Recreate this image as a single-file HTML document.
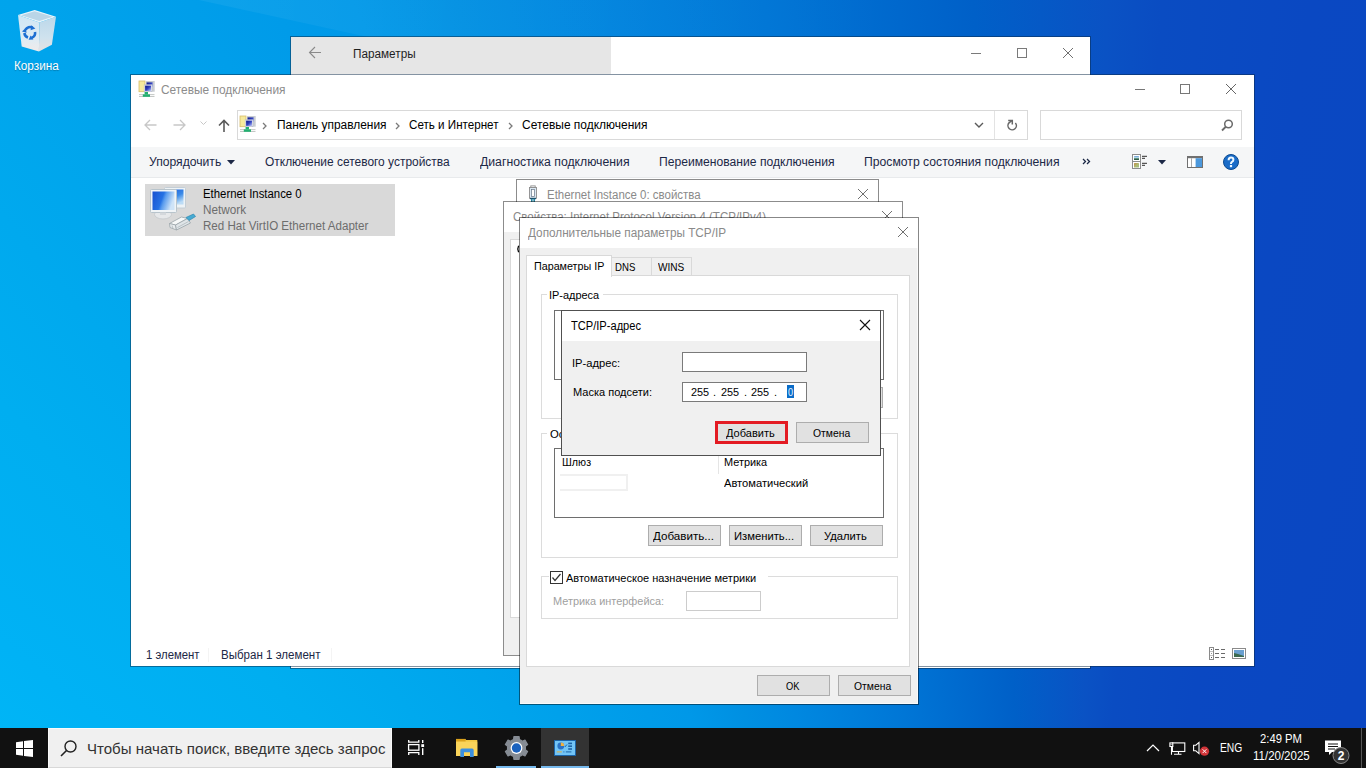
<!DOCTYPE html>
<html><head><meta charset="utf-8"><title>Сетевые подключения</title>
<style>
html,body{margin:0;padding:0;width:1366px;height:768px;overflow:hidden;background:#0a78dc;}
body{position:relative;font-family:"Liberation Sans", sans-serif;}
.a{position:absolute;}
.t{white-space:nowrap;transform-origin:0 0;}
svg.a{overflow:visible;}
</style></head><body>
<div class="a" id="desk" style="left:0;top:0;width:1366px;height:768px;background:conic-gradient(from -60deg at 1060px 1500px,#00b8f8 0deg,#00b6f6 5deg,#00b2f5 9deg,#00aef0 16deg,#00a4ec 25deg,#0098e8 34.7deg,#0090e2 38deg,#0088e0 41.4deg,#0076d6 48.8deg,#0060c8 56.7deg,#0a52c4 61.8deg,#0a4cc2 63.9deg,#0a48c2 69.5deg,#0a46c2 80deg,#0a46c2 360deg);"></div>
<div class="a" style="left:0;top:0;width:900px;height:200px;clip-path:polygon(199px 0,900px 0,900px 154px);background:linear-gradient(to right,rgba(255,255,255,.07),rgba(255,255,255,.03) 50%,rgba(255,255,255,0));"></div>
<svg class="a" style="left:14px;top:6px;" width="46" height="50" viewBox="0 0 46 50">
<defs><linearGradient id="rbL" x1="0" y1="0" x2="0" y2="1"><stop offset="0" stop-color="#cfe6f4"></stop><stop offset="0.6" stop-color="#dcecf5"></stop><stop offset="1" stop-color="#f0ebea"></stop></linearGradient>
<linearGradient id="rbR" x1="0" y1="0" x2="0" y2="1"><stop offset="0" stop-color="#bcd8ea"></stop><stop offset="0.6" stop-color="#cfe2ee"></stop><stop offset="1" stop-color="#e6e2e2"></stop></linearGradient></defs>
<path d="M4 9.1 L25.4 16.4 L24.9 45.6 L7.7 40.4 Z" fill="url(#rbL)"></path>
<path d="M25.4 16.4 L42 10.7 L37.9 38.8 L24.9 45.6 Z" fill="url(#rbR)"></path>
<path d="M4 9.1 L20.7 3.9 L42 10.7 L25.4 16.4 Z" fill="#e9f5fb"></path>
<path d="M7 9.2 L20.7 5.2 L38.8 10.8 L25.3 15 Z" fill="#b9d5e7"></path>
<g fill="none" stroke="#1c6fd2" stroke-width="2.6">
<path d="M11.5 23.8 A5.2 5.2 0 0 1 18.6 21.6"></path>
<path d="M21 26 A5.2 5.2 0 0 1 17.6 31.8"></path>
<path d="M14 31.4 A5.2 5.2 0 0 1 10.4 27"></path>
</g>
<g fill="#1c6fd2"><path d="M17.2 19.2 L21.4 22.6 L16.6 24.2Z"></path><path d="M19.4 33.6 L14.6 33.8 L16.6 29.4Z"></path><path d="M8 25.4 L11.6 22 L12.6 26.8Z"></path></g>
</svg>
<div class="a t" style="left: 14.4px; top: 59.84px; font-size: 12px; line-height: 12px; color: rgb(255, 255, 255); text-shadow: rgba(0, 0, 0, 0.25) 0px 1px 1px; transform: scaleX(0.9775);">Корзина</div>
<div class="a" style="left:290px;top:36px;width:801px;height:633px;background:#fff;border:1px solid rgba(10,40,70,.5);box-sizing:border-box;background-clip:padding-box;"></div>
<div class="a" style="left:291px;top:37px;width:320px;height:37px;background:#e6e6e6;"></div>
<svg class="a" style="left:308px;top:46px;" width="14" height="13" viewBox="0 0 14 13"><path d="M1.5 6.5 H13 M7 1 L1.5 6.5 L7 12" fill="none" stroke="#8a8a8a" stroke-width="1.1"></path></svg>
<div class="a t" style="left: 353px; top: 47.84px; font-size: 12px; line-height: 12px; color: rgb(31, 31, 31); transform: scaleX(0.9788);">Параметры</div>
<div class="a" style="left:971px;top:53px;width:10px;height:1px;background:#7a7a7a;"></div>
<div class="a" style="left:1017px;top:48px;width:10px;height:10px;border:1px solid #7a7a7a;box-sizing:border-box;background-clip:padding-box;"></div>
<svg class="a" style="left:1063px;top:48px;" width="10" height="10" viewBox="0 0 10 10"><path d="M0 0 L10 10 M10 0 L0 10" stroke="#707070" stroke-width="1"></path></svg>
<div class="a" style="left:130px;top:74px;width:1125px;height:593px;background:#fff;border:1px solid rgba(10,40,70,.5);box-sizing:border-box;background-clip:padding-box;"></div>
<svg class="a" style="left:139px;top:81px;" width="16" height="16" viewBox="0 0 16 16">
<defs><linearGradient id="nsc" x1="0" y1="0" x2="1" y2="1"><stop offset="0" stop-color="#0c1480"></stop><stop offset=".5" stop-color="#3040c0"></stop><stop offset="1" stop-color="#c0c8f8"></stop></linearGradient></defs>
<rect x="0" y="0" width="6" height="10.7" fill="#f6ea9c"></rect><rect x="0" y="0" width="6" height="10.7" fill="none" stroke="#d8bc6a" stroke-width=".8"></rect>
<rect x="7" y="0" width="8.7" height="10.7" fill="#c9cdd2"></rect><rect x="7.6" y="1.4" width="6" height="5" fill="url(#nsc)"></rect>
<rect x="5.2" y="3.8" width="7.7" height="6.9" fill="#f4f6fa" stroke="#b0b6c8" stroke-width=".6"></rect>
<rect x="6.1" y="4.6" width="5.9" height="5.3" fill="url(#nsc)"></rect>
<rect x="0" y="13.3" width="15.5" height=".8" fill="#b4b8b6"></rect><rect x="0" y="15" width="15.5" height=".8" fill="#b4b8b6"></rect>
<rect x="5.6" y="11" width="3.4" height="2.5" fill="#22b070"></rect><rect x="3.8" y="13.4" width="7.2" height="2.4" fill="#22b070"></rect>
</svg>
<div class="a t" style="left: 161px; top: 83.84px; font-size: 12px; line-height: 12px; color: rgb(140, 140, 140); transform: scaleX(0.9898);">Сетевые подключения</div>
<div class="a" style="left:1135px;top:89px;width:10px;height:1px;background:#777;"></div>
<div class="a" style="left:1180px;top:84px;width:10px;height:10px;border:1px solid #777;box-sizing:border-box;background-clip:padding-box;"></div>
<svg class="a" style="left:1226px;top:84px;" width="10" height="10" viewBox="0 0 10 10"><path d="M0 0 L10 10 M10 0 L0 10" stroke="#666" stroke-width="1"></path></svg>
<svg class="a" style="left:144px;top:119px;" width="13" height="12" viewBox="0 0 13 12"><path d="M1 6 H12.5 M6 1 L1 6 L6 11" fill="none" stroke="#c7c7c7" stroke-width="1.3"></path></svg>
<svg class="a" style="left:173px;top:119px;" width="13" height="12" viewBox="0 0 13 12"><path d="M0.5 6 H12 M7 1 L12 6 L7 11" fill="none" stroke="#c7c7c7" stroke-width="1.3"></path></svg>
<svg class="a" style="left:200px;top:121px;" width="7" height="5" viewBox="0 0 7 5"><path d="M0.5 0.5 L3.5 3.5 L6.5 0.5" fill="none" stroke="#c7c7c7" stroke-width="1"></path></svg>
<svg class="a" style="left:218px;top:119px;" width="12" height="13" viewBox="0 0 12 13"><path d="M6 13 V1.5 M1 6.5 L6 1.5 L11 6.5" fill="none" stroke="#5a5a5a" stroke-width="1.6"></path></svg>
<div class="a" style="left:237px;top:110px;width:791px;height:30px;background:#fff;border:1px solid #d9d9d9;box-sizing:border-box;background-clip:padding-box;"></div>
<div class="a" style="left:994px;top:111px;width:1px;height:28px;background:#e3e3e3;"></div>
<svg class="a" style="left:240px;top:116px;" width="16" height="16" viewBox="0 0 16 16">
<defs><linearGradient id="nsc" x1="0" y1="0" x2="1" y2="1"><stop offset="0" stop-color="#0c1480"></stop><stop offset=".5" stop-color="#3040c0"></stop><stop offset="1" stop-color="#c0c8f8"></stop></linearGradient></defs>
<rect x="0" y="0" width="6" height="10.7" fill="#f6ea9c"></rect><rect x="0" y="0" width="6" height="10.7" fill="none" stroke="#d8bc6a" stroke-width=".8"></rect>
<rect x="7" y="0" width="8.7" height="10.7" fill="#c9cdd2"></rect><rect x="7.6" y="1.4" width="6" height="5" fill="url(#nsc)"></rect>
<rect x="5.2" y="3.8" width="7.7" height="6.9" fill="#f4f6fa" stroke="#b0b6c8" stroke-width=".6"></rect>
<rect x="6.1" y="4.6" width="5.9" height="5.3" fill="url(#nsc)"></rect>
<rect x="0" y="13.3" width="15.5" height=".8" fill="#b4b8b6"></rect><rect x="0" y="15" width="15.5" height=".8" fill="#b4b8b6"></rect>
<rect x="5.6" y="11" width="3.4" height="2.5" fill="#22b070"></rect><rect x="3.8" y="13.4" width="7.2" height="2.4" fill="#22b070"></rect>
</svg>
<svg class="a" style="left:262px;top:122px;" width="6" height="8" viewBox="0 0 6 8"><path d="M1 1 L4 4 L1 7" fill="none" stroke="#7a7a7a" stroke-width="1.3"></path></svg>
<div class="a t" style="left: 277px; top: 118.84px; font-size: 12px; line-height: 12px; color: rgb(0, 0, 0); transform: scaleX(0.9933);">Панель управления</div>
<svg class="a" style="left:395px;top:122px;" width="6" height="8" viewBox="0 0 6 8"><path d="M1 1 L4 4 L1 7" fill="none" stroke="#7a7a7a" stroke-width="1.3"></path></svg>
<div class="a t" style="left: 409px; top: 118.84px; font-size: 12px; line-height: 12px; color: rgb(0, 0, 0); transform: scaleX(0.9685);">Сеть и Интернет</div>
<svg class="a" style="left:508px;top:122px;" width="6" height="8" viewBox="0 0 6 8"><path d="M1 1 L4 4 L1 7" fill="none" stroke="#7a7a7a" stroke-width="1.3"></path></svg>
<div class="a t" style="left: 522px; top: 118.84px; font-size: 12px; line-height: 12px; color: rgb(0, 0, 0); transform: scaleX(0.9978);">Сетевые подключения</div>
<svg class="a" style="left:974px;top:122px;" width="10" height="7" viewBox="0 0 10 7"><path d="M1 1 L5 5 L9 1" fill="none" stroke="#5a5a5a" stroke-width="1.4"></path></svg>
<svg class="a" style="left:1004px;top:116px;" width="16" height="16" viewBox="0 0 16 16"><path d="M11.4 6.9 A4.2 4.2 0 1 1 5.2 6.6 L8.3 4.5" fill="none" stroke="#666" stroke-width="1.5"></path><path d="M4.2 4.45 H9.05 M8.3 4.45 V8.6" fill="none" stroke="#666" stroke-width="1.5"></path></svg>
<div class="a" style="left:1040px;top:110px;width:202px;height:30px;background:#fff;border:1px solid #d9d9d9;box-sizing:border-box;background-clip:padding-box;"></div>
<svg class="a" style="left:1221px;top:119px;" width="13" height="13" viewBox="0 0 13 13"><circle cx="7.5" cy="5" r="3.8" fill="none" stroke="#6a6a6a" stroke-width="1.5"></circle><path d="M5 7.5 L1 11.5" stroke="#6a6a6a" stroke-width="1.8"></path></svg>
<div class="a" style="left:131px;top:147px;width:1123px;height:30px;background:#f5f6f7;"></div>
<div class="a" style="left:131px;top:177px;width:1123px;height:1px;background:#e8eaec;"></div>
<div class="a t" style="left: 149px; top: 155.84px; font-size: 12px; line-height: 12px; color: rgb(28, 40, 70); transform: scaleX(1.0119);">Упорядочить</div>
<svg class="a" style="left:226.5px;top:160px;" width="8" height="4.5" viewBox="0 0 8 4.5"><path d="M0 0 H8 L4 4.5Z" fill="#1c2846"></path></svg>
<div class="a t" style="left: 265px; top: 155.84px; font-size: 12px; line-height: 12px; color: rgb(28, 40, 70); transform: scaleX(0.9962);">Отключение сетевого устройства</div>
<div class="a t" style="left: 480px; top: 155.84px; font-size: 12px; line-height: 12px; color: rgb(28, 40, 70); transform: scaleX(1.0192);">Диагностика подключения</div>
<div class="a t" style="left: 659px; top: 155.84px; font-size: 12px; line-height: 12px; color: rgb(28, 40, 70); transform: scaleX(1.0109);">Переименование подключения</div>
<div class="a t" style="left: 864px; top: 155.84px; font-size: 12px; line-height: 12px; color: rgb(28, 40, 70); transform: scaleX(1.016);">Просмотр состояния подключения</div>
<svg class="a" style="left:1082px;top:158px;" width="9" height="7" viewBox="0 0 9 7"><path d="M1 1 L3.5 3.5 L1 6 M5 1 L7.5 3.5 L5 6" fill="none" stroke="#1c2846" stroke-width="1.3"></path></svg>
<svg class="a" style="left:1132px;top:154px;" width="16" height="16" viewBox="0 0 16 16">
<defs><linearGradient id="vg1" x1="0" y1="0" x2="0" y2="1"><stop offset="0" stop-color="#5a90d0"></stop><stop offset=".35" stop-color="#b8dcf0"></stop><stop offset=".7" stop-color="#4a8060"></stop><stop offset="1" stop-color="#1c4030"></stop></linearGradient>
<linearGradient id="vg2" x1="0" y1="0" x2="1" y2="1"><stop offset="0" stop-color="#c08840"></stop><stop offset=".5" stop-color="#b0b870"></stop><stop offset="1" stop-color="#a0c080"></stop></linearGradient></defs>
<rect x="0.5" y="0.5" width="8" height="14" fill="#fff" stroke="#8c8c8c"></rect><path d="M0.5 7.5 H8.5" stroke="#8c8c8c"></path>
<rect x="2" y="2" width="5" height="4" rx=".6" fill="url(#vg1)"></rect>
<rect x="2" y="9" width="5" height="4.5" rx=".6" fill="url(#vg2)"></rect>
<path d="M10 2.4 H15 M10 4.4 H13 M10 9.4 H15 M10 11.4 H13" stroke="#555" stroke-width="1.1"></path>
</svg>
<svg class="a" style="left:1157.5px;top:159.8px;" width="8" height="4.5" viewBox="0 0 8 4.5"><path d="M0 0 H8 L4 4.5Z" fill="#1c2846"></path></svg>
<svg class="a" style="left:1187px;top:156px;" width="16" height="12" viewBox="0 0 16 12"><rect x="0.5" y="0.5" width="15" height="11" fill="#fff" stroke="#707070"></rect><rect x="1" y="1" width="14" height="1.2" fill="#707070"></rect><rect x="8.6" y="2.2" width="6.4" height="8.8" fill="#4c98dc"></rect><rect x="4" y="2.2" width="1" height="8.8" fill="#a8a8a8"></rect></svg>
<svg class="a" style="left:1223px;top:154px;" width="16" height="16" viewBox="0 0 16 16"><circle cx="8" cy="8" r="7.5" fill="#1a6cc8" stroke="#0b4a90" stroke-width="1"></circle><path d="M5.6 6.2 Q5.6 3.6 8 3.6 Q10.4 3.6 10.4 5.7 Q10.4 7.1 9 7.9 Q8 8.5 8 9.6 V10" fill="none" stroke="#eef8ff" stroke-width="2"></path><rect x="6.9" y="11" width="2.2" height="2.2" fill="#eef8ff"></rect></svg>
<div class="a" style="left:145px;top:184px;width:250px;height:52px;background:#d9d9d9;"></div>
<svg class="a" style="left:145px;top:183px;" width="52" height="52" viewBox="0 0 52 52">
<defs><linearGradient id="scr" x1="0" y1="0" x2="1" y2="0.3"><stop offset="0" stop-color="#1650d0"></stop><stop offset=".5" stop-color="#2672e4"></stop><stop offset=".62" stop-color="#5a9cee"></stop><stop offset="1" stop-color="#cfe4f8"></stop></linearGradient><linearGradient id="scr2" x1="0" y1="0" x2="0.6" y2="1"><stop offset="0" stop-color="#1a58d8"></stop><stop offset=".6" stop-color="#3a8ae8"></stop><stop offset="1" stop-color="#bcdcf6"></stop></linearGradient></defs>
<rect x="19.5" y="4.5" width="21" height="20.5" rx="1" fill="#eef3f6" stroke="#c4ced6"></rect>
<rect x="21.5" y="6.5" width="17" height="15" fill="url(#scr2)"></rect>
<path d="M27 25 L31 25 L32 28 L26 28Z" fill="#d8dde0"></path>
<ellipse cx="18" cy="31.5" rx="8.5" ry="4.5" fill="#e6e8ea" stroke="#c4c8cc" stroke-width=".8"></ellipse>
<rect x="5.5" y="6.5" width="26" height="23" rx="1" fill="#f0f4f7" stroke="#b8c4cc"></rect>
<rect x="7.5" y="8.5" width="22" height="18.5" fill="url(#scr)"></rect>
<path d="M15 29.5 H21 V32 H15Z" fill="#d4d8dc"></path>
<path d="M24.5 40.5 L36.5 34 L42.5 35.5 L30.5 42Z" fill="#f6f8f8" stroke="#9aa4aa" stroke-width=".8"></path>
<path d="M24.5 40.5 L30.5 42 L31.5 47 L25 44.5Z" fill="#e8ecee" stroke="#9aa4aa" stroke-width=".8"></path>
<path d="M30.5 42 L42.5 35.5 L45.5 40 L31.5 47Z" fill="#dfe5e8" stroke="#9aa4aa" stroke-width=".8"></path>
<path d="M32.5 44.5 L43.5 38.5 M27 42.5 L28 45.5" stroke="#a8b0b4" stroke-width=".7"></path>
<path d="M41 34.5 L48.5 31 L50.5 33.5 L44 37.5Z" fill="#46aad2" stroke="#2c88b0" stroke-width=".7"></path>
</svg>
<div class="a t" style="left: 202.5px; top: 187.84px; font-size: 12px; line-height: 12px; color: rgb(0, 0, 0); transform: scaleX(0.9483);">Ethernet Instance 0</div>
<div class="a t" style="left: 202.5px; top: 203.84px; font-size: 12px; line-height: 12px; color: rgb(109, 109, 109); transform: scaleX(0.9776);">Network</div>
<div class="a t" style="left: 202.5px; top: 219.84px; font-size: 12px; line-height: 12px; color: rgb(109, 109, 109); transform: scaleX(0.9658);">Red Hat VirtIO Ethernet Adapter</div>
<div class="a t" style="left: 146px; top: 648.84px; font-size: 12px; line-height: 12px; color: rgb(28, 40, 70); transform: scaleX(0.9458);">1 элемент</div>
<div class="a" style="left:208px;top:648px;width:1px;height:14px;background:#f4f4f4;"></div>
<div class="a t" style="left: 221px; top: 648.84px; font-size: 12px; line-height: 12px; color: rgb(28, 40, 70); transform: scaleX(0.9624);">Выбран 1 элемент</div>
<div class="a" style="left:331px;top:648px;width:1px;height:14px;background:#f4f4f4;"></div>
<svg class="a" style="left:1209px;top:647px;" width="17" height="13" viewBox="0 0 17 13">
<rect x="0.5" y="0.5" width="4" height="12" fill="#fff" stroke="#8a8a8a"></rect><path d="M1 4.5 H4 M1 8.5 H4" stroke="#b0b0b0" stroke-width=".8"></path>
<rect x="2" y="2" width="1" height="1" fill="#555"></rect><rect x="2" y="6" width="1" height="1" fill="#999"></rect><rect x="2" y="10" width="1" height="1" fill="#555"></rect>
<path d="M6 2.5 H10 M12 2.5 H16 M6 6.5 H10 M12 6.5 H16 M6 10.5 H10 M12 10.5 H16" stroke="#6a6a6a" stroke-width="1"></path>
</svg>
<svg class="a" style="left:1232px;top:648px;" width="14" height="11" viewBox="0 0 14 11"><rect x="0.5" y="0.5" width="13" height="10" fill="#fff" stroke="#8a8a8a"></rect><rect x="2" y="2" width="10" height="7" fill="#6aa0d0"></rect><path d="M2 9 L2 5 L6 6 L12 8 L12 9Z" fill="#3c6a50"></path></svg>
<div class="a" style="left:516px;top:179px;width:363px;height:61px;background:#fff;border:1px solid rgba(0,0,0,.45);box-sizing:border-box;background-clip:padding-box;"></div>
<svg class="a" style="left:528px;top:185px;" width="10" height="17" viewBox="0 0 10 17"><rect x="2.8" y="0.9" width="4.4" height="2" fill="#fff" stroke="#8c8c8c" stroke-width=".9"></rect><rect x="1.5" y="2.5" width="7" height="10.8" fill="#dbe8f3" stroke="#8c8c8c" stroke-width=".9"></rect><rect x="3.6" y="4.4" width="2.8" height="7" fill="#fff" stroke="#6a7888" stroke-width=".7"></rect><rect x="2" y="12.9" width="6" height="1.3" fill="#1c5470"></rect><rect x="3" y="14" width="1.6" height="3" fill="#2a88a6"></rect><rect x="5.4" y="14" width="1.6" height="3" fill="#2a88a6"></rect></svg>
<div class="a t" style="left: 547px; top: 188.84px; font-size: 12px; line-height: 12px; color: rgb(138, 138, 138); transform: scaleX(0.956);">Ethernet Instance 0: свойства</div>
<svg class="a" style="left:858px;top:189px;" width="10" height="10" viewBox="0 0 10 10"><path d="M0 0 L10 10 M10 0 L0 10" stroke="#707070" stroke-width="1"></path></svg>
<div class="a" style="left:503px;top:201px;width:400px;height:455px;background:#f0f0f0;border:1px solid rgba(0,0,0,.45);box-sizing:border-box;background-clip:padding-box;"></div>
<div class="a" style="left:504px;top:202px;width:398px;height:30px;background:#fff;"></div>
<div class="a t" style="left: 513px; top: 210.84px; font-size: 12px; line-height: 12px; color: rgb(138, 138, 138); transform: scaleX(0.9603);">Свойства: Internet Protocol Version 4 (TCP/IPv4)</div>
<svg class="a" style="left:882px;top:211px;" width="10" height="10" viewBox="0 0 10 10"><path d="M0 0 L10 10 M10 0 L0 10" stroke="#707070" stroke-width="1"></path></svg>
<div class="a" style="left:510px;top:239px;width:390px;height:379px;background:#fff;border:1px solid #d9d9d9;box-sizing:border-box;background-clip:padding-box;"></div>
<svg class="a" style="left:516px;top:245px;" width="4" height="8" viewBox="0 0 4 8"><path d="M2.6 0.8 Q1 4 2.6 7.2" fill="none" stroke="#000" stroke-width="1.3"></path></svg>
<div class="a" style="left:519px;top:217px;width:400px;height:488px;background:#f0f0f0;border:1px solid rgba(0,0,0,.47);box-sizing:border-box;background-clip:padding-box;box-shadow:inset -1px -1px 0 #fafafa;"></div>
<div class="a" style="left:520px;top:218px;width:398px;height:30px;background:#fff;"></div>
<div class="a t" style="left: 528px; top: 226.84px; font-size: 12px; line-height: 12px; color: rgb(138, 138, 138); transform: scaleX(0.9794);">Дополнительные параметры TCP/IP</div>
<svg class="a" style="left:898px;top:227px;" width="10" height="10" viewBox="0 0 10 10"><path d="M0 0 L10 10 M10 0 L0 10" stroke="#707070" stroke-width="1"></path></svg>
<div class="a" style="left:526px;top:275px;width:384px;height:392px;background:#fff;border:1px solid #d9d9d9;box-sizing:border-box;background-clip:padding-box;"></div>
<div class="a" style="left:611px;top:257px;width:41px;height:19px;background:#f0f0f0;border:1px solid #d9d9d9;box-sizing:border-box;background-clip:padding-box;"></div>
<div class="a" style="left:651px;top:257px;width:41px;height:19px;background:#f0f0f0;border:1px solid #d9d9d9;box-sizing:border-box;background-clip:padding-box;"></div>
<div class="a" style="left:526px;top:255px;width:86px;height:22px;background:#fff;border:1px solid #d9d9d9;box-sizing:border-box;background-clip:padding-box;border-bottom:none;"></div>
<div class="a t" style="left: 534px; top: 260.69px; font-size: 11px; line-height: 11px; color: rgb(0, 0, 0); transform: scaleX(0.9756);">Параметры IP</div>
<div class="a t" style="left: 615px; top: 261.69px; font-size: 11px; line-height: 11px; color: rgb(0, 0, 0); transform: scaleX(0.8738);">DNS</div>
<div class="a t" style="left: 658px; top: 261.69px; font-size: 11px; line-height: 11px; color: rgb(0, 0, 0); transform: scaleX(0.9161);">WINS</div>
<div class="a" style="left:541px;top:294px;width:357px;height:125px;border:1px solid #dcdcdc;box-sizing:border-box;background-clip:padding-box;"></div>
<div class="a" style="left:547px;top:288px;width:56px;height:12px;background:#fff;"></div>
<div class="a t" style="left: 549.01px; top: 289.69px; font-size: 11px; line-height: 11px; color: rgb(0, 0, 0); transform: scaleX(0.9935);">IP-адреса</div>
<div class="a" style="left:554px;top:310px;width:330px;height:70px;background:#fff;border:1px solid #6e6e6e;box-sizing:border-box;background-clip:padding-box;"></div>
<div class="a" style="left:561px;top:311px;width:1px;height:68px;background:#e5e5e5;"></div>
<div class="a" style="left:880px;top:387px;width:3px;height:21px;background:#e1e1e1;border:1px solid #adadad;box-sizing:border-box;background-clip:padding-box;"></div>
<div class="a" style="left:541px;top:433px;width:357px;height:125px;border:1px solid #dcdcdc;box-sizing:border-box;background-clip:padding-box;"></div>
<div class="a" style="left:547px;top:427px;width:18px;height:13px;background:#fff;"></div>
<div class="a t" style="left: 550px; top: 428.69px; font-size: 11px; line-height: 11px; color: rgb(0, 0, 0); transform: scaleX(1.0305);">Ос</div>
<div class="a" style="left:554px;top:448px;width:330px;height:70px;background:#fff;border:1px solid #6e6e6e;box-sizing:border-box;background-clip:padding-box;"></div>
<div class="a t" style="left: 562px; top: 456.69px; font-size: 11px; line-height: 11px; color: rgb(0, 0, 0); transform: scaleX(0.9748);">Шлюз</div>
<div class="a" style="left:718px;top:455px;width:1px;height:19px;background:#e5e5e5;"></div>
<div class="a t" style="left: 724px; top: 456.69px; font-size: 11px; line-height: 11px; color: rgb(0, 0, 0); transform: scaleX(0.9911);">Метрика</div>
<div class="a t" style="left: 724px; top: 477.69px; font-size: 11px; line-height: 11px; color: rgb(0, 0, 0); transform: scaleX(1.0133);">Автоматический</div>
<div class="a" style="left:560px;top:474px;width:68px;height:17px;background:#fff;border:2px solid #f0f0f0;box-sizing:border-box;background-clip:padding-box;border-left:none;"></div>
<div class="a" style="left:648px;top:525px;width:73px;height:21px;background:#e1e1e1;border:1px solid #adadad;box-sizing:border-box;background-clip:padding-box;"></div>
<div class="a t" style="left: 653px; top: 530.69px; font-size: 11px; line-height: 11px; color: rgb(0, 0, 0); transform: scaleX(1.0567);">Добавить...</div>
<div class="a" style="left:729px;top:525px;width:73px;height:21px;background:#e1e1e1;border:1px solid #adadad;box-sizing:border-box;background-clip:padding-box;"></div>
<div class="a t" style="left: 734px; top: 530.69px; font-size: 11px; line-height: 11px; color: rgb(0, 0, 0); transform: scaleX(1.0216);">Изменить...</div>
<div class="a" style="left:810px;top:525px;width:73px;height:21px;background:#e1e1e1;border:1px solid #adadad;box-sizing:border-box;background-clip:padding-box;"></div>
<div class="a t" style="left: 824px; top: 530.69px; font-size: 11px; line-height: 11px; color: rgb(0, 0, 0); transform: scaleX(1.0174);">Удалить</div>
<div class="a" style="left:541px;top:576px;width:357px;height:43px;border:1px solid #dcdcdc;box-sizing:border-box;background-clip:padding-box;"></div>
<div class="a" style="left:549px;top:570px;width:219px;height:14px;background:#fff;"></div>
<div class="a" style="left:550px;top:571px;width:13px;height:13px;background:#fff;border:1px solid #333;box-sizing:border-box;background-clip:padding-box;"></div>
<svg class="a" style="left:550px;top:571px;" width="13" height="13" viewBox="0 0 13 13"><path d="M2.5 6.5 L5 9.5 L10.5 3" fill="none" stroke="#333" stroke-width="1.2"></path></svg>
<div class="a t" style="left: 566px; top: 572.69px; font-size: 11px; line-height: 11px; color: rgb(0, 0, 0); transform: scaleX(1.0005);">Автоматическое назначение метрики</div>
<div class="a t" style="left: 553px; top: 595.69px; font-size: 11px; line-height: 11px; color: rgb(160, 160, 160); transform: scaleX(0.9923);">Метрика интерфейса:</div>
<div class="a" style="left:686px;top:591px;width:75px;height:20px;background:#fff;border:1px solid #cccccc;box-sizing:border-box;background-clip:padding-box;"></div>
<div class="a" style="left:757px;top:675px;width:73px;height:21px;background:#e1e1e1;border:1px solid #adadad;box-sizing:border-box;background-clip:padding-box;"></div>
<div class="a t" style="left: 786px; top: 680.69px; font-size: 11px; line-height: 11px; color: rgb(0, 0, 0); transform: scaleX(0.8456);">OK</div>
<div class="a" style="left:838px;top:675px;width:73px;height:21px;background:#e1e1e1;border:1px solid #adadad;box-sizing:border-box;background-clip:padding-box;"></div>
<div class="a t" style="left: 854px; top: 680.69px; font-size: 11px; line-height: 11px; color: rgb(0, 0, 0); transform: scaleX(0.9418);">Отмена</div>
<div class="a" style="left:561px;top:310px;width:320px;height:146px;background:#f0f0f0;border:1px solid #505050;box-sizing:border-box;background-clip:padding-box;"></div>
<div class="a" style="left:562px;top:311px;width:318px;height:30px;background:#fff;"></div>
<div class="a t" style="left: 571px; top: 319.84px; font-size: 12px; line-height: 12px; color: rgb(0, 0, 0); transform: scaleX(0.9248);">TCP/IP-адрес</div>
<svg class="a" style="left:860px;top:320px;" width="10" height="10" viewBox="0 0 10 10"><path d="M0 0 L10 10 M10 0 L0 10" stroke="#111" stroke-width="1.1"></path></svg>
<div class="a t" style="left: 571.99px; top: 357.69px; font-size: 11px; line-height: 11px; color: rgb(0, 0, 0); transform: scaleX(1.0145);">IP-адрес:</div>
<div class="a t" style="left: 573px; top: 386.69px; font-size: 11px; line-height: 11px; color: rgb(0, 0, 0); transform: scaleX(1.0023);">Маска подсети:</div>
<div class="a" style="left:682px;top:352px;width:125px;height:20px;background:#fff;border:1px solid #7a7a7a;box-sizing:border-box;background-clip:padding-box;"></div>
<div class="a" style="left:682px;top:382px;width:125px;height:20px;background:#fff;border:1px solid #7a7a7a;box-sizing:border-box;background-clip:padding-box;"></div>
<div class="a t" style="left: 691px; top: 386.69px; font-size: 11px; line-height: 11px; color: rgb(0, 0, 0); transform: scaleX(0.9871);">255</div>
<div class="a t" style="left: 713px; top: 386.69px; font-size: 11px; line-height: 11px; color: rgb(0, 0, 0);">.</div>
<div class="a t" style="left: 721px; top: 386.69px; font-size: 11px; line-height: 11px; color: rgb(0, 0, 0); transform: scaleX(0.9871);">255</div>
<div class="a t" style="left: 744px; top: 386.69px; font-size: 11px; line-height: 11px; color: rgb(0, 0, 0);">.</div>
<div class="a t" style="left: 751px; top: 386.69px; font-size: 11px; line-height: 11px; color: rgb(0, 0, 0); transform: scaleX(0.9871);">255</div>
<div class="a t" style="left: 774px; top: 386.69px; font-size: 11px; line-height: 11px; color: rgb(0, 0, 0);">.</div>
<div class="a" style="left:787px;top:385px;width:7px;height:13px;background:#0a6cc8;"></div>
<div class="a t" style="left: 788px; top: 386.69px; font-size: 11px; line-height: 11px; color: rgb(232, 244, 255); transform: scaleX(0.8333);">0</div>
<div class="a" style="left:715px;top:421px;width:73px;height:23px;background:#e31b23;"></div>
<div class="a" style="left:718px;top:424px;width:67px;height:17px;background:#e1e1e1;"></div>
<div class="a t" style="left: 726px; top: 427.69px; font-size: 11px; line-height: 11px; color: rgb(0, 0, 0); transform: scaleX(1.0024);">Добавить</div>
<div class="a" style="left:796px;top:422px;width:73px;height:21px;background:#e1e1e1;border:1px solid #adadad;box-sizing:border-box;background-clip:padding-box;"></div>
<div class="a t" style="left: 813px; top: 427.69px; font-size: 11px; line-height: 11px; color: rgb(0, 0, 0); transform: scaleX(0.9418);">Отмена</div>
<div class="a" style="left:0px;top:728px;width:1366px;height:40px;background:#111111;"></div>
<svg class="a" style="left:16px;top:740px;" width="17" height="17" viewBox="0 0 17 17"><path d="M0 2.3 L7 1.3 V8 H0Z M8 1.1 L17 0 V8 H8Z M0 9 H7 V15.7 L0 14.7Z M8 9 H17 V17 L8 15.9Z" fill="#fff"></path></svg>
<div class="a" style="left:48px;top:728px;width:344px;height:40px;background:#f0f0f0;border:1px solid #fafafa;box-sizing:border-box;background-clip:padding-box;border-bottom-color:#d8d8d8;"></div>
<svg class="a" style="left:60px;top:740px;" width="17" height="17" viewBox="0 0 17 17"><circle cx="10.5" cy="6.5" r="5.5" fill="none" stroke="#222" stroke-width="1.4"></circle><path d="M6.5 10.5 L1 16" stroke="#222" stroke-width="1.6"></path></svg>
<div class="a t" style="left: 87px; top: 741.3px; font-size: 15px; line-height: 15px; color: rgb(51, 51, 51); transform: scaleX(1.0031);">Чтобы начать поиск, введите здесь запрос</div>
<svg class="a" style="left:402px;top:734px;" width="30" height="28" viewBox="0 0 30 28"><path d="M6.7 6 V8.2 H16.8 V6 M6.7 21 V18.7 H16.8 V21" fill="none" stroke="#fff" stroke-width="1.3"></path><rect x="6.6" y="10.6" width="10.3" height="5.6" fill="none" stroke="#fff" stroke-width="1.3"></rect><rect x="20" y="6" width="1.4" height="3" fill="#fff"></rect><rect x="19.3" y="10.2" width="2.8" height="2.8" fill="#fff"></rect><rect x="20" y="14.2" width="1.4" height="6.8" fill="#fff"></rect></svg>
<svg class="a" style="left:452px;top:734px;" width="30" height="26" viewBox="0 0 30 26"><path d="M4 5 H13 L14.2 6 H25.3 V22 H4Z" fill="#f4c842"></path><rect x="4" y="4.9" width="9.6" height="2.9" fill="#dba21c"></rect><rect x="4" y="7.6" width="21.3" height="14.4" fill="#fad45a"></rect><path d="M8.3 23 V16.2 Q8.3 14.6 9.9 14.6 H20.1 Q21.7 14.6 21.7 16.2 V23 H18 V18.3 H12 V23Z" fill="#3b8fdf"></path></svg>
<svg class="a" style="left:503.5px;top:736px;" width="25" height="24" viewBox="0 0 25 24"><g transform="translate(12.5,12)"><path d="M-4.50 -7.79 L-2.93 -8.51 L-2.61 -11.30 L2.61 -11.30 L2.93 -8.51 L4.50 -7.79 L5.90 -6.79 L8.48 -7.91 L11.09 -3.39 L8.83 -1.72 L9.00 0.00 L8.83 1.72 L11.09 3.39 L8.48 7.91 L5.90 6.79 L4.50 7.79 L2.93 8.51 L2.61 11.30 L-2.61 11.30 L-2.93 8.51 L-4.50 7.79 L-5.90 6.79 L-8.48 7.91 L-11.09 3.39 L-8.83 1.72 L-9.00 -0.00 L-8.83 -1.72 L-11.09 -3.39 L-8.48 -7.91 L-5.90 -6.79Z" fill="#868c94" stroke="#868c94" stroke-width="1.2" stroke-linejoin="round"></path><circle r="5.9" fill="#fff"></circle><circle r="4.7" fill="#1b62be"></circle></g></svg>
<div class="a" style="left:496px;top:766px;width:40px;height:2px;background:#76b9ed;"></div>
<div class="a" style="left:541px;top:728px;width:48px;height:40px;background:#333333;"></div>
<div class="a" style="left:541px;top:766px;width:48px;height:2px;background:#76b9ed;"></div>
<svg class="a" style="left:554px;top:740px;" width="22" height="16" viewBox="0 0 22 16"><rect x="0.5" y="0.5" width="21" height="15" fill="#72c4f6" stroke="#1c64a8" stroke-width="1"></rect><circle cx="6.8" cy="6" r="3.4" fill="#2a72c6"></circle><path d="M6.8 6 V2.6 A3.4 3.4 0 0 1 10.2 6Z" fill="#f0b040"></path><path d="M10.8 7 L13 4.5" stroke="#1c64a8" stroke-width="1"></path><rect x="14.2" y="2.6" width="3.8" height="1.6" fill="#1c64a8"></rect><rect x="14.2" y="5.4" width="3.8" height="1.6" fill="#1c64a8"></rect><rect x="14.2" y="8.2" width="3.8" height="1.6" fill="#1c64a8"></rect><rect x="2.8" y="11.4" width="5" height="1" fill="#e0b040"></rect><rect x="9.4" y="11.4" width="1" height="1" fill="#1c64a8"></rect><rect x="11.8" y="11.4" width="5.6" height="1" fill="#1c64a8"></rect></svg>
<svg class="a" style="left:1146px;top:744px;" width="14" height="8" viewBox="0 0 14 8"><path d="M1 7 L7 1 L13 7" fill="none" stroke="#fff" stroke-width="1.2"></path></svg>
<svg class="a" style="left:1166px;top:739px;" width="22" height="18" viewBox="0 0 22 18"><rect x="6.4" y="3.9" width="12.4" height="8.6" fill="none" stroke="#fff" stroke-width="1.1"></rect><rect x="3.9" y="3.9" width="2.9" height="3.6" fill="#111" stroke="#fff" stroke-width="1.1"></rect><path d="M5.5 7.5 V15.8 M12.5 12.5 V15.2 M8 15.3 H15.5" stroke="#fff" stroke-width="1.1" fill="none"></path><path d="M4.6 5.2 L5.4 6 L6.2 5.2" stroke="#fff" stroke-width=".7" fill="none"></path></svg>
<svg class="a" style="left:1190px;top:739px;" width="22" height="18" viewBox="0 0 22 18"><path d="M3.6 6.2 H5.8 L9 3.4 V14.6 L5.8 11.8 H3.6Z" fill="none" stroke="#fff" stroke-width="1.1" stroke-linejoin="miter"></path><circle cx="14.5" cy="12.2" r="4.6" fill="#d13438"></circle><path d="M12.6 10.3 L16.4 14.1 M16.4 10.3 L12.6 14.1" stroke="#fff" stroke-width="1"></path></svg>
<div class="a t" style="left: 1220px; top: 741.84px; font-size: 12px; line-height: 12px; color: rgb(255, 255, 255); transform: scaleX(0.857);">ENG</div>
<div class="a t" style="left: 1260px; top: 732.84px; font-size: 12px; line-height: 12px; color: rgb(255, 255, 255); transform: scaleX(0.9397);">2:49 PM</div>
<div class="a t" style="left: 1253px; top: 749.84px; font-size: 12px; line-height: 12px; color: rgb(255, 255, 255); transform: scaleX(0.9581);">11/20/2025</div>
<svg class="a" style="left:1324px;top:739px;" width="27" height="26" viewBox="0 0 27 26"><path d="M1 1.5 H17 V13 H8 L5 16 V13 H1Z" fill="#fff"></path><path d="M4 5 H14 M4 7.5 H14 M4 10 H11" stroke="#111" stroke-width="1"></path><circle cx="17" cy="16.5" r="8" fill="#333" stroke="#888" stroke-width="1"></circle><text x="17" y="21" font-family="Liberation Sans" font-weight="bold" font-size="12" fill="#fff" text-anchor="middle">2</text></svg>
<div class="a" style="left:1361px;top:728px;width:1px;height:40px;background:#555;"></div>
</body></html>
